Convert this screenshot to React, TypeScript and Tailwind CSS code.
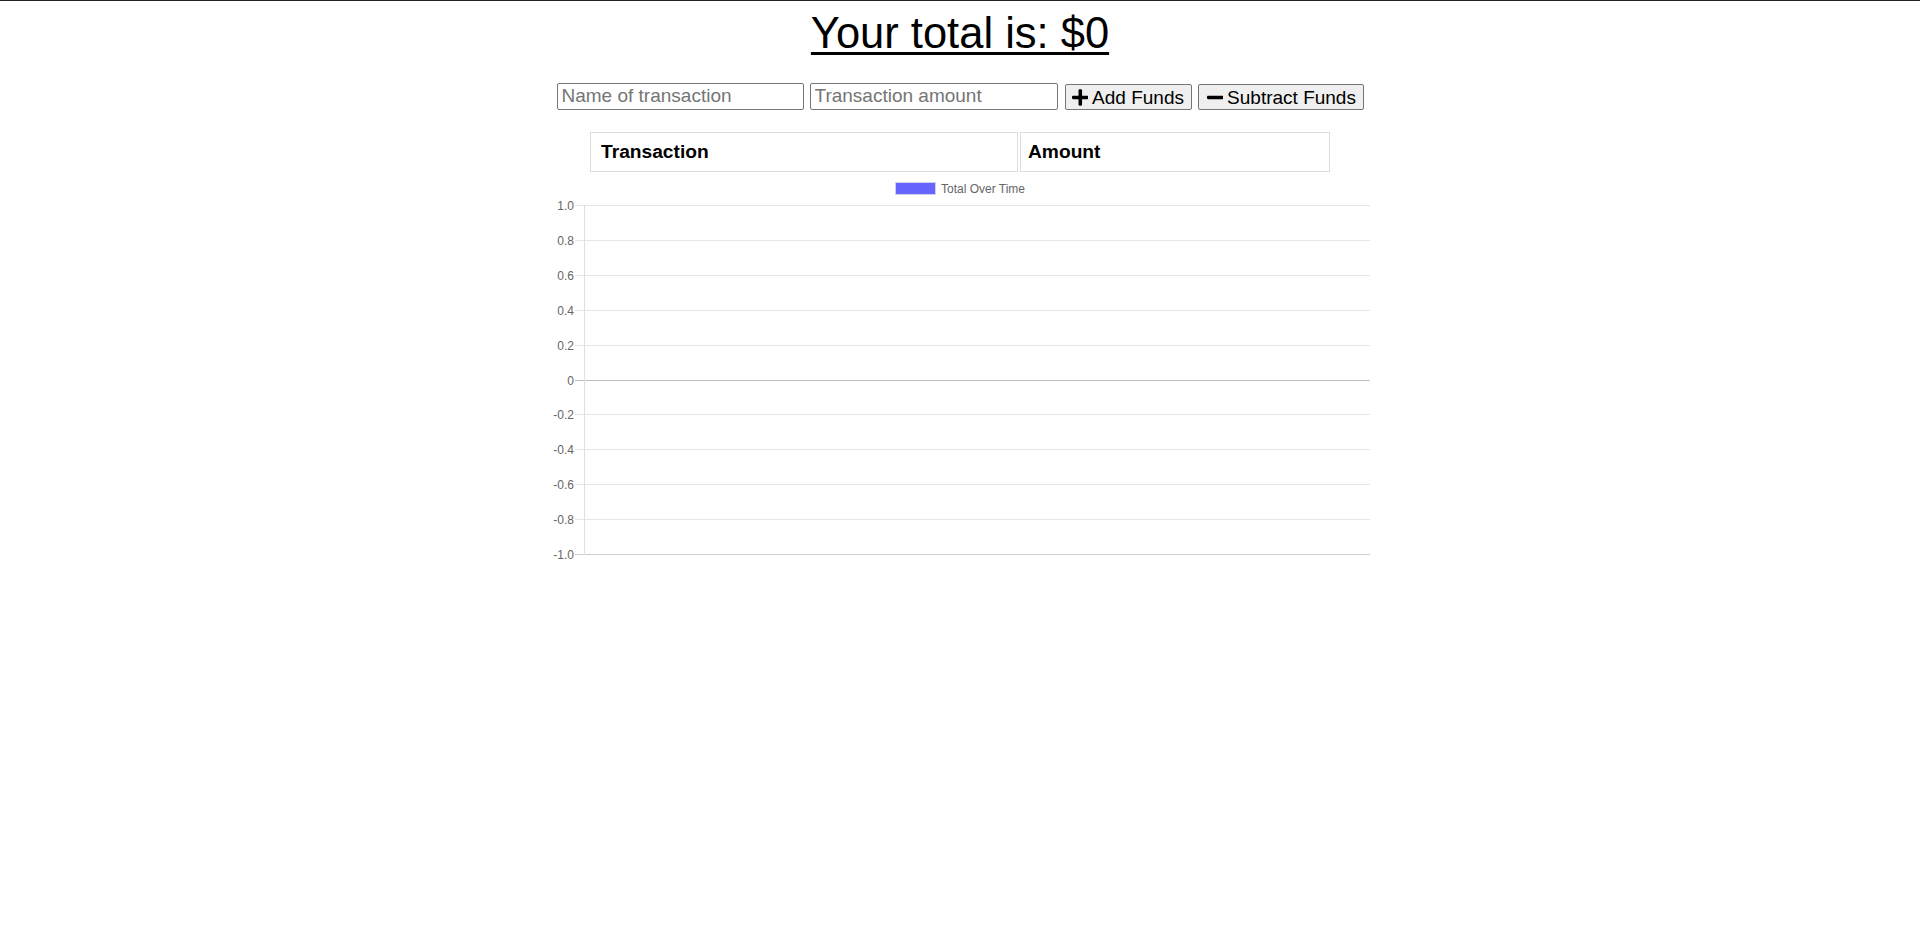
import React from "react";

const ticks = ["1.0", "0.8", "0.6", "0.4", "0.2", "0", "-0.2", "-0.4", "-0.6", "-0.8", "-1.0"];

function PlusIcon() {
  return (
    <svg viewBox="0 0 448 512" className="w-[16.6px] h-[19px] inline-block" fill="currentColor">
      <path d="M416 208H272V64c0-17.67-14.33-32-32-32h-32c-17.67 0-32 14.33-32 32v144H32c-17.67 0-32 14.33-32 32v32c0 17.67 14.33 32 32 32h144v144c0 17.67 14.33 32 32 32h32c17.67 0 32-14.33 32-32V304h144c17.67 0 32-14.33 32-32v-32c0-17.67-14.33-32-32-32z" />
    </svg>
  );
}

function MinusIcon() {
  return (
    <svg viewBox="0 0 448 512" className="w-[16.6px] h-[19px] inline-block" fill="currentColor">
      <path d="M416 208H32c-17.67 0-32 14.33-32 32v32c0 17.67 14.33 32 32 32h384c17.67 0 32-14.33 32-32v-32c0-17.67-14.33-32-32-32z" />
    </svg>
  );
}

function Chart() {
  const top = 33;
  const step = 34.9;
  return (
    <svg width={840} height={395} viewBox="0 0 840 395" className="block" style={{ fontFamily: '"Liberation Sans", Arial, sans-serif' }}>
      <rect x={355.5} y={10.5} width={40} height={12} fill="#6666ff" stroke="#cfcfef" strokeWidth={1} />
      <text x={401} y={20.5} fontSize={12} fill="#666">Total Over Time</text>
      {ticks.map((t, i) => {
        const y = Math.round(top + step * i) + 0.5;
        const isZero = t === "0";
        const isBottom = i === ticks.length - 1;
        return (
          <g key={t}>
            <line x1={35} x2={830} y1={y} y2={y} stroke={isZero ? "#bfbfbf" : isBottom ? "#cfcfcf" : "#e6e6e6"} strokeWidth={1} />
            <text x={34} y={y + 4} fontSize={12} fill="#666" textAnchor="end">{t}</text>
          </g>
        );
      })}
      <line x1={44.5} x2={44.5} y1={33} y2={383} stroke="#e0e0e0" strokeWidth={1} />
    </svg>
  );
}

export default function App() {
  return (
    <div className="min-h-[945px] bg-white border-t border-[#222] text-black" style={{ fontFamily: '"Liberation Sans", Arial, sans-serif' }}>
      <h1 className="text-center text-[43.5px] leading-[48px] mt-[8px] underline decoration-[3px] underline-offset-[4px]">
        Your total is: $0
      </h1>
      <div className="flex justify-center items-end mt-[26px] text-[19px]">
        <input
          type="text"
          placeholder="Name of transaction"
          className="w-[247px] h-[27px] border border-[#767676] rounded-[2px] px-[4px] text-[19px] placeholder:text-[#757575] outline-none"
        />
        <input
          type="number"
          placeholder="Transaction amount"
          className="ml-[6px] w-[248px] h-[27px] border border-[#767676] rounded-[2px] px-[4px] text-[19px] placeholder:text-[#757575] outline-none"
        />
        <button className="ml-[7px] w-[127px] h-[26px] border border-[#767676] rounded-[2px] bg-[#efefef] flex items-center pl-[6px] gap-[4px] text-[19px] leading-none">
          <PlusIcon />
          <span>Add Funds</span>
        </button>
        <button className="ml-[6px] w-[166px] h-[26px] border border-[#767676] rounded-[2px] bg-[#efefef] flex items-center pl-[8px] gap-[4px] text-[19px] leading-none">
          <MinusIcon />
          <span>Subtract Funds</span>
        </button>
      </div>
      <div className="flex justify-center gap-[2px] mt-[22px]">
        <div className="w-[428px] h-[40px] border border-[#dddddd] px-[10px] flex items-center font-bold text-[19.2px]">Transaction</div>
        <div className="w-[310px] h-[40px] border border-[#dddddd] px-[7px] flex items-center font-bold text-[19.2px]">Amount</div>
      </div>
      <div className="flex justify-center">
        <Chart />
      </div>
    </div>
  );
}
